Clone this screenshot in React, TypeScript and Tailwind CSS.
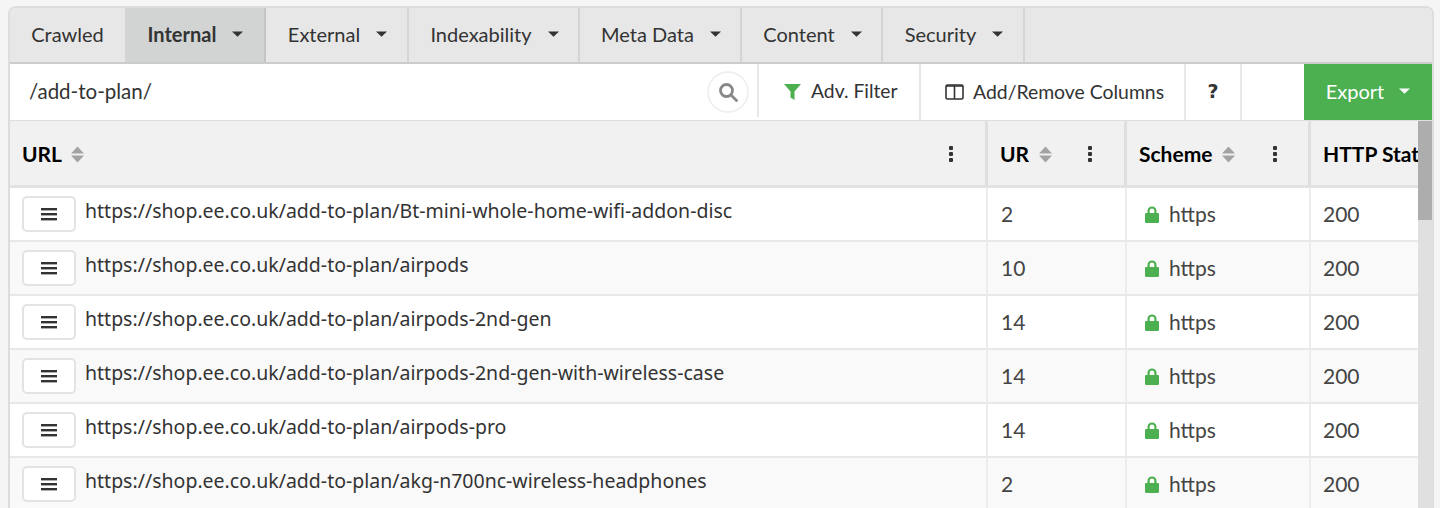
import React from "react";

const tabs = [
  { label: "Crawled", w: "w-[115px]", caret: false },
  { label: "Internal", w: "w-[141px]", caret: true, active: true },
  { label: "External", w: "w-[143px]", caret: true },
  { label: "Indexability", w: "w-[171px]", caret: true },
  { label: "Meta Data", w: "w-[162px]", caret: true },
  { label: "Content", w: "w-[141px]", caret: true },
  { label: "Security", w: "w-[142px]", caret: true },
];

const rows = [
  ["Bt-mini-whole-home-wifi-addon-disc", "2"],
  ["airpods", "10"],
  ["airpods-2nd-gen", "14"],
  ["airpods-2nd-gen-with-wireless-case", "14"],
  ["airpods-pro", "14"],
  ["akg-n700nc-wireless-headphones", "2"],
];

function Caret({ color = "#333333" }: { color?: string }) {
  return (
    <svg width="11" height="6" viewBox="0 0 11 6" className="shrink-0">
      <path d="M0 0.500h11L5.500 5.800z" fill={color} />
    </svg>
  );
}

function Sort() {
  return (
    <svg width="13" height="17" viewBox="0 0 13 17" className="shrink-0">
      <path d="M6.500 0.500L13 7.500H0z M0 9.500h13L6.500 16.500z" fill="#a3a3a3" />
    </svg>
  );
}

function Dots() {
  return (
    <svg width="4" height="16" viewBox="0 0 4 16" className="shrink-0">
      <rect x="0" y="0" width="4" height="4" rx="1" fill="#333333" />
      <rect x="0" y="6" width="4" height="4" rx="1" fill="#333333" />
      <rect x="0" y="12" width="4" height="4" rx="1" fill="#333333" />
    </svg>
  );
}

function Lock() {
  return (
    <svg width="14" height="17" viewBox="0 0 14 17" className="shrink-0">
      <path
        d="M1.200 7H2.500V4.800C2.500 2.200 4.400 0.400 7 0.400S11.500 2.200 11.500 4.800V7H12.800C13.500 7 14 7.500 14 8.200V15.800C14 16.500 13.500 17 12.800 17H1.200C0.500 17 0 16.500 0 15.800V8.200C0 7.500 0.500 7 1.200 7ZM4.700 7H9.300V4.800C9.300 3.400 8.300 2.500 7 2.500S4.700 3.400 4.700 4.800Z"
        fill="#4caf50"
      />
    </svg>
  );
}

function Bars() {
  return (
    <svg width="16" height="13" viewBox="0 0 16 13">
      <rect x="0" y="0" width="16" height="2.400" fill="#333333" />
      <rect x="0" y="5" width="16" height="2.400" fill="#333333" />
      <rect x="0" y="10" width="16" height="2.400" fill="#333333" />
    </svg>
  );
}

export default function App() {
  return (
    <div className="h-[508px] w-[1440px] overflow-hidden bg-[#f5f5f5] pt-[6px] pl-[8px] pr-[6px] font-['Lato',sans-serif] text-[20px] text-[#333333]">
      <div className="h-[520px] overflow-hidden rounded-t-[8px] border-2 border-b-0 border-[#dddddd] bg-white">
        <div className="flex h-[54px] bg-[#e7e7e7]">
          {tabs.map((t) => (
            <div
              key={t.label}
              className={`flex ${t.w} shrink-0 items-center justify-center gap-[16px] ${
                t.label === "Crawled" ? "" : "border-r-2 pl-[2px]"
              } ${t.active ? "border-[#c4c6c5] bg-[#d2d4d3] font-bold" : "border-[#d4d4d4]"}`}
            >
              <span className="pb-[2px] leading-none">{t.label}</span>
              {t.caret && (
                <span className="pb-[3px]">
                  <Caret />
                </span>
              )}
            </div>
          ))}
        </div>
        <div className="flex h-[59px] border-t-2 border-b border-t-[#cccccc] border-b-[#dfdfdf] bg-white">
          <div className="flex w-[747px] shrink-0 items-center justify-between pl-[19px] pr-[8px] text-[20.500px]">
            <span className="pb-[2px]">/add-to-plan/</span>
            <div className="flex h-[42px] w-[42px] items-center justify-center rounded-full border-2 border-[#f0f0f0]">
              <svg width="20" height="20" viewBox="0 0 20 20" fill="none" stroke="#888888" strokeWidth="2.800">
                <circle cx="8.500" cy="8.500" r="6" />
                <path d="M13 13L18.500 18.500" strokeLinecap="round" />
              </svg>
            </div>
          </div>
          <div className="mb-[3px] flex w-[162px] shrink-0 items-center gap-[10px] border-l-2 border-[#e7e7e7] pt-[3px] pl-[25px] text-[19.300px]">
            <svg width="17" height="16" viewBox="0 0 17 16">
              <path d="M0 0h17L10.500 7.500V16L6.500 13.500V7.500z" fill="#4caf50" />
            </svg>
            <span className="pb-[2px]">Adv. Filter</span>
          </div>
          <div className="flex w-[265px] shrink-0 items-center gap-[9px] border-l-2 border-[#e7e7e7] pl-[24px] text-[19.400px]">
            <svg width="19" height="16" viewBox="0 0 19 16" fill="none" stroke="#333333" strokeWidth="1.600">
              <rect x="1" y="1" width="17" height="14" rx="1.500" />
              <path d="M9.500 1V15" />
              <path d="M1 2H18" strokeWidth="1.400" />
            </svg>
            <span className="pb-[1px]">Add/Remove Columns</span>
          </div>
          <div className="flex w-[56px] shrink-0 items-center justify-center border-l-2 border-[#e7e7e7] font-bold">
            <span className="pb-[2px] font-['DejaVu_Sans',sans-serif] text-[19px] text-[#333333]">?</span>
          </div>
          <div className="w-[64px] shrink-0 border-l-2 border-[#e7e7e7]" />
          <div className="flex flex-1 items-center justify-center gap-[15px] bg-[#4caf50] text-white">
            <span className="pb-[3px]">Export</span>
            <span className="pb-[3px]">
              <Caret color="#ffffff" />
            </span>
          </div>
        </div>
        <div className="flex">
          <div className="w-[1408px] shrink-0 overflow-hidden">
            <div className="flex h-[67px] w-[1500px] border-b-[3px] border-[#e2e2e2] bg-[#f1f1f1] text-[21px] font-bold text-black">
              <div className="flex w-[978px] shrink-0 items-center border-r-[3px] border-[#dfdfdf] pt-[2px] pl-[12px] pr-[32px]">
                <span>URL</span>
                <span className="ml-[9px]"><Sort /></span>
                <span className="ml-auto"><Dots /></span>
              </div>
              <div className="flex w-[139px] shrink-0 items-center border-r-[3px] border-[#dfdfdf] pt-[2px] pl-[12px] pr-[32px]">
                <span>UR</span>
                <span className="ml-[10px]"><Sort /></span>
                <span className="ml-auto"><Dots /></span>
              </div>
              <div className="flex w-[184px] shrink-0 items-center border-r-[3px] border-[#dfdfdf] pt-[2px] pl-[12px] pr-[31px]">
                <span>Scheme</span>
                <span className="ml-[10px]"><Sort /></span>
                <span className="ml-auto"><Dots /></span>
              </div>
              <div className="flex w-[199px] shrink-0 items-center pt-[2px] pl-[12px]">
                <span className="whitespace-nowrap">HTTP Status</span>
              </div>
            </div>
            {rows.map(([slug, ur], i) => (
              <div
                key={slug}
                className={`flex h-[54px] w-[1500px] border-b-2 border-[#e8e8e8] text-[21px] ${i % 2 === 1 ? "bg-[#f9f9f9]" : "bg-white"}`}
              >
                <div className="flex w-[978px] shrink-0 items-center gap-[9px] border-r-2 border-[#ececec] pl-[12px]">
                  <div className="flex h-[36px] w-[54px] shrink-0 items-center justify-center rounded-[5px] border-2 border-[#e3e3e3] bg-white pr-[1px]">
                    <Bars />
                  </div>
                  <span className="pb-[7px] font-['Noto_Sans',sans-serif] text-[19.500px] whitespace-nowrap text-[#333333]">
                    https://shop.ee.co.uk/add-to-plan/{slug}
                  </span>
                </div>
                <div className="flex w-[139px] shrink-0 items-center border-r-2 border-[#ececec] pl-[13px] text-[#444444]">
                  {ur}
                </div>
                <div className="flex w-[184px] shrink-0 items-center gap-[10px] border-r-2 border-[#ececec] pl-[18px] text-[#444444]">
                  <Lock />
                  <span className="pb-[1px]">https</span>
                </div>
                <div className="flex w-[199px] shrink-0 items-center pl-[12px] text-[#444444]">200</div>
              </div>
            ))}
          </div>
          <div className="w-[14px] shrink-0 bg-[#e0e0e0]">
            <div className="h-[99px] bg-[#adadad]" />
          </div>
        </div>
      </div>
    </div>
  );
}
